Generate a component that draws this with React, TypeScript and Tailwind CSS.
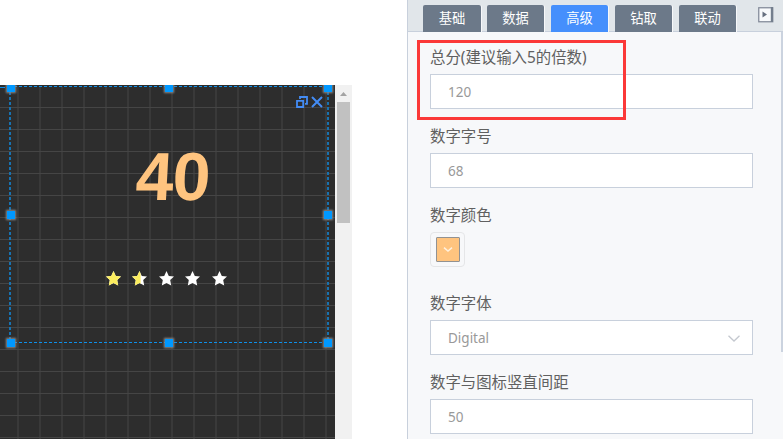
import React from "react";

const sans = "font-['Noto_Sans','Noto_Sans_CJK_SC',sans-serif]";

const handles = [
  "left-[7px] top-[-1px]",
  "left-[165px] top-[-1px]",
  "left-[324px] top-[-1px]",
  "left-[7px] top-[126px]",
  "left-[324px] top-[126px]",
  "left-[7px] top-[254px]",
  "left-[165px] top-[254px]",
  "left-[324px] top-[254px]",
];

const stars = [1, 0.5, 0, 0, 0];

function Star({ fill, id }: { fill: number; id: string }) {
  const points = "7.5,0 9.8,5 15,5.6 11.2,9.1 12.2,14.5 7.5,12 2.8,14.5 3.8,9.1 0,5.6 5.2,5";
  return (
    <svg width="15" height="15" viewBox="0 0 15 15">
      <clipPath id={id}>
        <rect width={fill === 0.5 ? 8.6 : 15 * fill} height="15" />
      </clipPath>
      <polygon points={points} fill="#fff" />
      {fill > 0 && <polygon points={points} fill="#fbed5e" clipPath={`url(#${id})`} />}
    </svg>
  );
}

function Canvas() {
  return (
    <section className="relative isolate h-[354px] w-[335px] overflow-hidden bg-[#2d2d2d]">
      <svg className="absolute inset-0 -z-10" width="335" height="354">
        <defs>
          <pattern id="grid" x="17" y="0" width="22" height="22" patternUnits="userSpaceOnUse">
            <rect width="2" height="22" fill="#393939" />
            <rect width="22" height="1" fill="#454545" />
          </pattern>
        </defs>
        <rect y="1" width="335" height="353" fill="url(#grid)" />
        <path d="M0 2.5H5" stroke="#0e8ce4" />
        <path d="M9 1.5H329M9 257.5H329" stroke="#0e90ea" strokeDasharray="3 2" />
        <path d="M10 2V258M328 2V258" stroke="#1872b0" strokeWidth="2" strokeDasharray="3 2" />
      </svg>
      {handles.map((place) => (
        <i key={place} className={`absolute size-2 bg-[#0098ff] shadow-[0_0_2px_1px_#8a8a8a] ${place}`} />
      ))}
      <svg className="absolute left-[296px] top-[11px]" width="28" height="12" fill="none" stroke="#438cf5">
        <path d="M1 4.8H7.2V11H1ZM4 3V1H11V7.8H9" strokeWidth="1.8" />
        <path d="M16 1L26 11M26 1L16 11" strokeWidth="2" />
      </svg>
      <div className="flex flex-col items-center pt-[60px]">
        <span className="ml-[10px] block h-[62px] origin-center -skew-x-3 font-['Liberation_Sans',sans-serif] text-[68px] font-bold leading-[62px] tracking-[-1px] text-[#ffc47f]">
          40
        </span>
      </div>
      <div className="ml-[106px] mt-[64px] flex gap-[11.4px]">
        {stars.map((fill, i) => (
          <Star key={i} id={`star-${i}`} fill={fill} />
        ))}
      </div>
    </section>
  );
}

function CanvasScrollbar() {
  return (
    <div className="flex h-[354px] w-[17px] flex-col items-center bg-[#f1f1f1] pt-[7px]">
      <svg width="7" height="4">
        <path d="M3.5 0L7 4H0Z" fill="#a3a3a3" />
      </svg>
      <div className="mt-[6px] h-[121px] w-[13px] bg-[#c1c1c1]" />
    </div>
  );
}

function Tab({ label, active, wide }: { label: string; active?: boolean; wide?: boolean }) {
  return (
    <button
      className={`h-[27px] rounded-t-[2px] text-[13.3px] text-white shadow-[1px_0_0_#f7f8fa] ${wide ? "w-[58px]" : "w-[57px]"} ${active ? "bg-[#458ffc]" : "bg-[#6c7989]"}`}
    >
      {label}
    </button>
  );
}

function Label({ children }: { children: React.ReactNode }) {
  return <div className="h-[34px] pt-px text-[15.4px] leading-[34px] text-[#606060]">{children}</div>;
}

function Field({ value, select }: { value: string; select?: boolean }) {
  return (
    <div className="flex h-[35px] w-[323px] items-center justify-between border border-[#c8d0dc] bg-white pl-[17px] pr-3 text-[13.5px] text-[#999]">
      <span className="pt-[2px]">{value}</span>
      {select && (
        <svg className="mt-px" width="12" height="7" fill="none" stroke="#c4c8cf" strokeWidth="1.3">
          <path d="M.5 .7L6 6L11.5 .7" />
        </svg>
      )}
    </div>
  );
}

function Panel() {
  return (
    <aside className="relative h-[439px] w-[376px] overflow-hidden border-l border-[#c8d0dc] bg-[#f7f8fa]">
      <header className="flex h-8 border-b border-[#c8d0dc] bg-[#e1e6ea] pl-[15px] pt-[5px]">
        <div className="flex gap-[7px]">
          <div className="-mr-px">
            <Tab label="基础" wide />
          </div>
          <Tab label="数据" />
          <Tab label="高级" active />
          <Tab label="钻取" />
          <Tab label="联动" />
        </div>
        <svg className="ml-[22px] mt-[2px]" width="16" height="16">
          <rect x=".75" y=".75" width="14" height="14" fill="#f8fafc" stroke="#858d9b" strokeWidth="1.3" />
          <path d="M12.8 0H15V15H12.8Z" fill="#737e8d" />
          <path d="M4.5 4.5L9 7.5L4.5 10.5Z" fill="#667080" />
        </svg>
      </header>
      <div className="flex justify-between">
        <main className="pl-[22px] pt-2">
          <Label>总分(建议输入5的倍数)</Label>
          <Field value="120" />
          <div className="h-[10px]" />
          <Label>数字字号</Label>
          <Field value="68" />
          <div className="h-[10px]" />
          <Label>数字颜色</Label>
          <div className="flex size-[35px] items-start justify-center rounded-[4px] border border-[#e5e6e8] pt-[4px]">
            <div className="flex h-[25px] w-6 items-center justify-center rounded-[1px] border border-[#929292] bg-[#ffc47f]">
              <svg width="10" height="5" fill="none" stroke="#fff1df" strokeWidth="1.5">
                <path d="M1 .7L5 4L9 .7" />
              </svg>
            </div>
          </div>
          <div className="h-[19px]" />
          <Label>数字字体</Label>
          <Field value="Digital" select />
          <div className="h-[10px]" />
          <Label>数字与图标竖直间距</Label>
          <Field value="50" />
        </main>
        <div className="h-[320px] w-[2px] bg-[#cbd3df]" />
      </div>
      <div className="absolute left-[9px] top-10 h-20 w-[209px] border-[3px] border-[#fb3838]" />
    </aside>
  );
}

export default function App() {
  return (
    <div className={`flex h-[439px] w-[783px] justify-between overflow-hidden bg-white ${sans}`}>
      <div className="flex pt-[85px]">
        <Canvas />
        <CanvasScrollbar />
      </div>
      <Panel />
    </div>
  );
}
